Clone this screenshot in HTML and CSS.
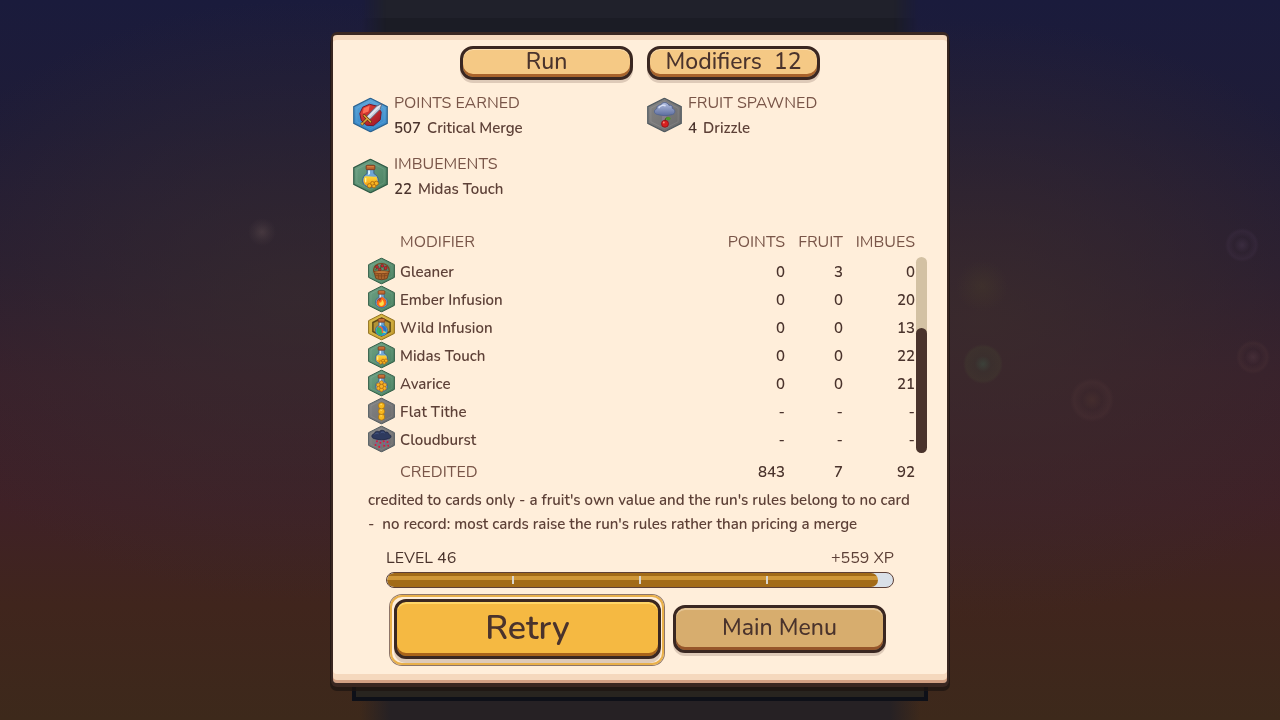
FILE: index.html
```
<!DOCTYPE html>
<html lang="en">
<head>
    <meta charset="UTF-8">
    <meta name="viewport" content="width=device-width, initial-scale=1">
    <title>Run summary</title>
    <link rel="stylesheet" href="styles.css">
</head>
<body>
    <!-- shared icon shapes -->
    <svg class="defs" aria-hidden="true">
        <defs>
            <linearGradient id="g-blue" x1="0" y1="0" x2="0" y2="1"><stop offset="0" stop-color="#5aa4d8"/><stop offset="1" stop-color="#3385c8"/></linearGradient>
            <linearGradient id="g-green" x1="0" y1="0" x2="1" y2="1"><stop offset="0" stop-color="#6fa286"/><stop offset="1" stop-color="#477f5e"/></linearGradient>
            <linearGradient id="g-gray" x1="0" y1="0" x2="1" y2="1"><stop offset="0" stop-color="#858585"/><stop offset="1" stop-color="#6a6a6c"/></linearGradient>
            <linearGradient id="g-gold" x1="0" y1="0" x2="1" y2="1"><stop offset="0" stop-color="#dfc04a"/><stop offset="1" stop-color="#c29a2a"/></linearGradient>
            <linearGradient id="g-red" x1="0" y1="0" x2="1" y2="1"><stop offset="0" stop-color="#f04a34"/><stop offset="1" stop-color="#9c1228"/></linearGradient>
            <linearGradient id="g-cloud" x1="0" y1="0" x2="0" y2="1"><stop offset="0" stop-color="#b4c0e2"/><stop offset="1" stop-color="#5c6d9e"/></linearGradient>
            <linearGradient id="g-honey" x1="0" y1="0" x2="0" y2="1"><stop offset="0" stop-color="#ffd838"/><stop offset="1" stop-color="#f59a10"/></linearGradient>

            <symbol id="hex" viewBox="0 0 36 36">
                <path d="M18 .8 35.2 9.5v17L18 35.2.8 26.500v-17z"/>
                <path d="M18 4 32 11v14L18 32 4 25V11z" fill="none" stroke="#fff" stroke-opacity=".1" stroke-width="1"/>
            </symbol>

            <symbol id="flask" viewBox="0 0 36 36">
                <path d="M14.500 11h7v4.500c3 1.500 4.500 4 4.500 7 0 4.500-3.500 7-8 7s-8-2.500-8-7c0-3 1.500-5.500 4.500-7z" fill="#6fa6d4" stroke="#3c6285" stroke-width="1"/>
                <path d="M15.500 12h2v4l-2 1z" fill="#d9f1ff"/>
                <rect x="13.500" y="7" width="9" height="4.500" rx="1" fill="#b8622e" stroke="#7a3518" stroke-width=".8"/>
                <path d="M14.500 8h7v1h-7z" fill="#e08a45"/>
            </symbol>

            <symbol id="i-critical" viewBox="0 0 36 36">
                <use href="#hex" fill="url(#g-blue)" stroke="#2c6390" stroke-width="1.300"/>
                <path d="M10 10l7-3 8 2 4 6-1 8-7 6-7-.5-5.500-5-1.500-7z" fill="url(#g-red)" stroke="#74152a" stroke-width="1"/>
                <path d="M11 11l6-2.500-1 6-6 2z" fill="#ff7058"/>
                <path d="M29.500 6.500l-1.500 5.500-11 11-3.500-3L24 9z" fill="#c6cede" stroke="#59647e" stroke-width=".9"/>
                <path d="M28 8l-13 13" stroke="#fff" stroke-width="1"/>
                <path d="M11.500 18.500l6.500 6.500M14 22.500l-4 4" stroke="#5b3414" stroke-width="2.800" stroke-linecap="round"/>
                <path d="M11.500 18.500l6.500 6.500M14 22.500l-4 4" stroke="#dca43c" stroke-width="1.600" stroke-linecap="round"/>
                <circle cx="9.500" cy="27" r="1.500" fill="#e8b040" stroke="#6d4114" stroke-width=".6"/>
            </symbol>

            <symbol id="i-drizzle" viewBox="0 0 36 36">
                <use href="#hex" fill="url(#g-gray)" stroke="#505a60" stroke-width="1.300"/>
                <path d="M15.500 17h4.500v7h-4.500z" fill="#98839b" opacity=".6"/>
                <path d="M11 17.500c-4-.5-4.500-4.500-1-6C10 8 13 7.500 14 8c1-3.500 7-4 8.500 0 3-.5 4 1 3.500 3 4 1.500 3 6 0 6.500-5 1.500-10 1.500-15 0z" fill="url(#g-cloud)" stroke="#55658f" stroke-width="1"/>
                <path d="M12 11c1-3 6-4 7-2" fill="none" stroke="#d8e0f5" stroke-width="1.400"/>
                <path d="M18.500 25c0-3 1-4 3-4" fill="none" stroke="#3b6d1e" stroke-width="1.200"/>
                <path d="M19.500 21.500c2-2.500 4-1.500 5 0-1 2.500-4 2.500-5 0z" fill="#4f9a28"/>
                <circle cx="18.500" cy="27" r="3.600" fill="#d82020" stroke="#8c1016" stroke-width=".8"/>
                <circle cx="17.300" cy="25.800" r="1" fill="#ff8a7a"/>
            </symbol>

            <symbol id="i-midas" viewBox="0 0 36 36">
                <use href="#hex" fill="url(#g-green)" stroke="#2f5a45" stroke-width="1.300"/>
                <use href="#flask"/>
                <path d="M12 18.500c4-1 8 1 12 0 2.500 4 1.500 10-6 10s-8.500-6-6-10z" fill="url(#g-honey)"/>
                <path d="M13 20.500v3.500" stroke="#fff2a0" stroke-width="1.400" stroke-linecap="round"/>
                <g fill="#f6b524" stroke="#a5620d" stroke-width=".8"><circle cx="17" cy="28" r="2.200"/><circle cx="21.500" cy="28" r="2.200"/><circle cx="24" cy="25.500" r="2.200"/><circle cx="20" cy="25.500" r="1.900"/></g>
            </symbol>

            <symbol id="i-gleaner" viewBox="0 0 36 36">
                <use href="#hex" fill="url(#g-green)" stroke="#2f5a45" stroke-width="1.300"/>
                <path d="M7.500 19C7 11 12 8 18 8s11 4 10.500 11" fill="none" stroke="#7b421d" stroke-width="1.600"/>
                <path d="M10 17l3-5M16 17l2-7M21 17l4-5" stroke="#416d28" stroke-width="1.600"/>
                <g fill="#c82a30" stroke="#671620" stroke-width=".7"><circle cx="12" cy="12.500" r="2"/><circle cx="19" cy="11" r="2"/><circle cx="15.500" cy="16" r="2"/><circle cx="23.500" cy="14" r="2.200"/></g>
                <path d="M8 19h20l-2.500 9c-4 2-11 2-15 0z" fill="#a9632b" stroke="#6b3415" stroke-width="1"/>
                <path d="M9.500 23.500c5 1.500 12 1.500 17 0M13.500 21l.8 7.500M18 21v8M22.500 21l-.8 7.500" fill="none" stroke="#7f451c" stroke-width="1"/>
                <ellipse cx="18" cy="19.500" rx="10.500" ry="2" fill="#c27b39" stroke="#6b3415" stroke-width=".9"/>
            </symbol>

            <symbol id="i-ember" viewBox="0 0 36 36">
                <use href="#hex" fill="url(#g-green)" stroke="#2f5a45" stroke-width="1.300"/>
                <use href="#flask"/>
                <circle cx="18" cy="22.500" r="6.500" fill="#a8442d"/>
                <path d="M18 14.500c5 3 7 6 6 9.500-1 3.500-3.500 4.500-6 4.500s-6-1.500-6-5c0-2 1-3 2-4.500l1 2c2-1.500 3.500-4 3-6.500z" fill="#ff6a18"/>
                <path d="M18.500 18.500c2.500 2 3 5 2.500 6.500-1 3-5.500 3-6 0-.3-1.500.5-2 1-3l1 1c1-1 1.500-2.500 1.500-4.500z" fill="#ffe04a"/>
            </symbol>

            <symbol id="i-wild" viewBox="0 0 36 36">
                <use href="#hex" fill="url(#g-gold)" stroke="#8f6e1c" stroke-width="1.300"/>
                <path d="M18 6 29.500 12v12L18 30 6.500 24V12z" fill="#b39335" stroke="#5d4a18" stroke-width="2"/>
                <use href="#flask"/>
                <circle cx="18" cy="22.500" r="7" fill="#22a0d8"/>
                <path d="M12 20c2-4 5-4 6-1s-1 3 1 4 1 4-1 6c-5 0-8-4-6-9z" fill="#34b06a"/>
                <path d="M19 16c4 1 6 4 5.500 7-2 1-3-1-4-2s-3-2-1.500-5z" fill="#2f70cf"/>
                <path d="M14 18c3-1 5 1 5 3s1 3 0 5" fill="none" stroke="#f0603a" stroke-width="2"/>
                <path d="M20 25c1-1 3 0 3 1" fill="none" stroke="#fbe052" stroke-width="1.500"/>
            </symbol>

            <symbol id="i-avarice" viewBox="0 0 36 36">
                <use href="#hex" fill="url(#g-green)" stroke="#2f5a45" stroke-width="1.300"/>
                <use href="#flask"/>
                <g fill="#f8b326" stroke="#a8620c" stroke-width=".8"><circle cx="18" cy="17.500" r="2.600"/><circle cx="13.800" cy="20.500" r="2.600"/><circle cx="22.200" cy="20.500" r="2.600"/><circle cx="14.200" cy="25" r="2.600"/><circle cx="21.800" cy="25" r="2.600"/><circle cx="18" cy="27" r="2.600"/><circle cx="18" cy="22.500" r="2.800"/></g>
            </symbol>

            <symbol id="i-tithe" viewBox="0 0 36 36">
                <use href="#hex" fill="url(#g-gray)" stroke="#505a60" stroke-width="1.300"/>
                <g fill="#f8b81c" stroke="#9a6510" stroke-width=".8"><circle cx="18" cy="26" r="4.200"/><circle cx="18" cy="18.500" r="4.200"/><circle cx="18" cy="11" r="4.200"/></g>
                <path d="M16.500 9.500h2M16.500 17h2M16.500 24.500h2" stroke="#ffe680" stroke-width="1.200"/>
            </symbol>

            <symbol id="i-cloudburst" viewBox="0 0 36 36">
                <use href="#hex" fill="url(#g-gray)" stroke="#505a60" stroke-width="1.300"/>
                <path d="M12 18l-2 9M17 18l-1 11M22 18v10M26 18l1 7" stroke="#8459a5" stroke-width="1.300"/>
                <g fill="#d81c3a"><circle cx="12" cy="21" r="1.400"/><circle cx="10" cy="26" r="1.300"/><circle cx="16.500" cy="23" r="1.400"/><circle cx="15" cy="28.500" r="1.400"/><circle cx="21" cy="21" r="1.400"/><circle cx="21.500" cy="27" r="1.400"/><circle cx="26" cy="22" r="1.400"/><circle cx="27" cy="27" r="1.300"/></g>
                <path d="M8.500 17.500c-5-1-4-6 0-6.500C9 7.500 13 7 15 8.500c2-3 7-2.500 8 .5 3-1 5 .5 4.500 3 4.500.5 4 5 0 5.500-6 2-13 2-19 0z" fill="#2e3a5e" stroke="#1d2541" stroke-width="1"/>
                <path d="M9 12c1-2 4-2 5-1M17 10c1-1.500 4-1.500 5 0" fill="none" stroke="#4c5e8b" stroke-width="1.200"/>
            </symbol>
        </defs>
    </svg>

    <div class="scene" aria-hidden="true">
        <div class="lane"></div>
    </div>

    <main class="stage">
        <section class="panel">
            <nav class="tabs">
                <button class="btn tab" type="button">Run</button>
                <button class="btn tab" type="button">Modifiers&nbsp; 12</button>
            </nav>

            <div class="stats">
                <div class="stat">
                    <svg class="icon-big"><use href="#i-critical"/></svg>
                    <div>
                        <h2>POINTS EARNED</h2>
                        <p><b>507</b>Critical Merge</p>
                    </div>
                </div>
                <div class="stat">
                    <svg class="icon-big"><use href="#i-drizzle"/></svg>
                    <div>
                        <h2>FRUIT SPAWNED</h2>
                        <p><b>4</b>Drizzle</p>
                    </div>
                </div>
                <div class="stat">
                    <svg class="icon-big"><use href="#i-midas"/></svg>
                    <div>
                        <h2>IMBUEMENTS</h2>
                        <p><b>22</b>Midas Touch</p>
                    </div>
                </div>
            </div>

            <div class="report">
                <table class="mods">
                    <thead>
                        <tr><td class="ico"></td><th class="name">MODIFIER</th><th class="points">POINTS</th><th class="fruit">FRUIT</th><th class="imbues">IMBUES</th></tr>
                    </thead>
                    <tbody>
                        <tr><td class="ico"><svg class="icon"><use href="#i-gleaner"/></svg></td><td class="name">Gleaner</td><td>0</td><td>3</td><td>0</td></tr>
                        <tr><td class="ico"><svg class="icon"><use href="#i-ember"/></svg></td><td class="name">Ember Infusion</td><td>0</td><td>0</td><td>20</td></tr>
                        <tr><td class="ico"><svg class="icon"><use href="#i-wild"/></svg></td><td class="name">Wild Infusion</td><td>0</td><td>0</td><td>13</td></tr>
                        <tr><td class="ico"><svg class="icon"><use href="#i-midas"/></svg></td><td class="name">Midas Touch</td><td>0</td><td>0</td><td>22</td></tr>
                        <tr><td class="ico"><svg class="icon"><use href="#i-avarice"/></svg></td><td class="name">Avarice</td><td>0</td><td>0</td><td>21</td></tr>
                        <tr><td class="ico"><svg class="icon"><use href="#i-tithe"/></svg></td><td class="name">Flat Tithe</td><td>-</td><td>-</td><td>-</td></tr>
                        <tr><td class="ico"><svg class="icon"><use href="#i-cloudburst"/></svg></td><td class="name">Cloudburst</td><td>-</td><td>-</td><td>-</td></tr>
                    </tbody>
                    <tfoot>
                        <tr><td class="ico"></td><th class="name">CREDITED</th><td>843</td><td>7</td><td>92</td></tr>
                    </tfoot>
                </table>
                <div class="scrollbar"><div class="thumb"></div></div>
            </div>

            <div class="notes">
                <p>credited to cards only - a fruit's own value and the run's rules belong to no card</p>
                <p>-&nbsp; no record: most cards raise the run's rules rather than pricing a merge</p>
            </div>

            <div class="level">
                <div class="level-text">
                    <span id="level-name">LEVEL 46</span>
                    <span class="xp">+559 XP</span>
                </div>
                <div class="bar" role="progressbar" aria-labelledby="level-name" aria-valuenow="97" aria-valuemin="0" aria-valuemax="100">
                    <div class="fill" style="width: 97%"></div>
                    <div class="ticks"><i></i><i></i><i></i><i></i></div>
                </div>
            </div>

            <div class="actions">
                <button class="btn retry" type="button">Retry</button>
                <button class="btn menu" type="button">Main Menu</button>
            </div>
        </section>
    </main>
</body>
</html>
```
FILE: styles.css
```
*{
    margin: 0;
    padding: 0;
    box-sizing: border-box;
}
body{
    min-height: 100vh;
    font-family: Nunito, Lato, "Noto Sans", sans-serif;
    font-size: 15px;
    font-weight: 600;
    line-height: 24px;
    color: #5d4037;
    background-color: #2c2029;
    overflow-x: hidden;
}
.defs{
    position: absolute;
    width: 0;
    height: 0;
}

/* night sky behind the panel */
.scene{
    position: fixed;
    inset: 0;
    z-index: -1;
    background:
        radial-gradient(circle at 262px 232px, rgba(110,90,90,.35) 0, rgba(110,90,90,.12) 8px, transparent 14px),
        radial-gradient(circle at 983px 364px, rgba(60,90,70,.5) 0, rgba(60,75,50,.2) 8px, rgba(70,75,50,.25) 17px, transparent 20px),
        radial-gradient(circle at 1092px 400px, rgba(90,60,50,.3) 0, transparent 10px, rgba(90,60,60,.2) 18px, transparent 22px),
        radial-gradient(circle at 1242px 245px, rgba(90,70,100,.3) 0, transparent 8px, rgba(80,60,90,.2) 14px, transparent 17px),
        radial-gradient(circle at 1253px 357px, rgba(100,70,80,.3) 0, transparent 8px, rgba(90,60,60,.2) 14px, transparent 17px),
        radial-gradient(circle at 982px 286px, rgba(80,70,40,.25) 0, transparent 26px),
        radial-gradient(ellipse 420px 300px at 300px 300px, rgba(56,44,46,.7), transparent),
        radial-gradient(ellipse 420px 300px at 980px 320px, rgba(60,44,44,.8), transparent),
        linear-gradient(#1a1b3c 0, #1f1c37 18%, #2a1e31 38%, #38202c 52%, #3f2127 70%, #40251d 84%, #3d291b 100%);
}
.lane{
    width: 576px;
    height: 701px;
    margin: 0 auto;
    border: 4px solid #0e1018;
    border-top: 0;
    background: linear-gradient(#20212b 18px, #1b1c25 18px, #1b1c25 40px, #28241f 90%);
    -webkit-mask: linear-gradient(90deg, transparent 10px, #000 34px, #000 542px, transparent 566px) top / 100% 300px no-repeat, linear-gradient(#000, #000) bottom / 100% 400px no-repeat;
}
.scene::after{
    content: "";
    display: block;
    width: 560px;
    height: 100px;
    margin: 0 auto;
    background: linear-gradient(90deg, transparent, #262124 30px, #262124 530px, transparent);
}

.stage{
    display: flex;
    justify-content: center;
    padding-top: 32px;
}
.panel{
    width: 618px;
    max-width: 100%;
    padding: 11px 20px 24px;
    border: 2px solid #3a2721;
    border-top-width: 3px;
    border-radius: 6px;
    background-color: #f5d8bd;
    background-image: linear-gradient(#ffeeda, #ffeeda);
    box-shadow: inset 0 5px 0 #f5d8bd, inset 0 -3px 0 #d3a184, inset 0 -9px 0 #f5d8bd, 0 2px 0 #3a2721, 0 5px 0 1px rgba(30,20,17,.75);
}

/* buttons */
.btn{
    font-family: inherit;
    font-weight: 500;
    color: #4a332c;
    text-align: center;
    border: 3px solid #3a2721;
    cursor: pointer;
}
.tabs{
    display: flex;
    justify-content: center;
    gap: 14px;
    margin-bottom: 11px;
}
.tab{
    width: 173px;
    height: 34px;
    padding-bottom: 3px;
    border-radius: 13px;
    font-size: 23px;
    line-height: 24px;
    background-color: #f5c985;
    box-shadow: inset 0 -3px 0 #a9632b, inset 0 1px 0 #fbe0b4, 0 3px 0 #decab8;
}

/* best cards */
.stats{
    display: grid;
    grid-template-columns: 1fr 1fr;
    gap: 11px 14px;
    margin-bottom: 23px;
    line-height: 25px;
}
.stat{
    display: flex;
    gap: 6px;
}
.icon-big{
    width: 35px;
    height: 36px;
    margin-top: 6px;
}
.stat h2{
    font-size: 16px;
    font-weight: 400;
    color: #795548;
}
.stat b{
    margin-right: 6px;
    font-weight: 600;
    color: #4a332c;
}

/* modifier table */
.report{
    display: flex;
    padding-left: 15px;
}
.mods{
    flex: 1;
    border-collapse: collapse;
    table-layout: fixed;
}
.mods th{
    height: 32px;
    padding-top: 2px;
    font-size: 16px;
    font-weight: 400;
    color: #795548;
    text-align: right;
}
.mods td{
    height: 28px;
    padding-top: 2px;
    text-align: right;
    color: #4a332c;
}
.mods .name{
    text-align: left;
}
.mods td.name{
    color: #5d4037;
}
.mods .ico{
    width: 32px;
    padding-top: 0;
}
.points{
    width: 80px;
}
.fruit{
    width: 58px;
}
.imbues{
    width: 72px;
}
.mods tfoot th, .mods tfoot td{
    height: 35px;
}
.icon{
    display: block;
    width: 27px;
    height: 28px;
}
.scrollbar{
    width: 11px;
    margin: 32px 0 35px 1px;
    border-radius: 6px;
    background-color: #d3c1a3;
}
.thumb{
    height: 125px;
    margin-top: 71px;
    border-radius: 6px;
    background-color: #4a332c;
}
.notes{
    padding-left: 15px;
}

/* level progress */
.level{
    margin: 10px 33px 0;
}
.level-text{
    display: flex;
    justify-content: space-between;
    margin-bottom: 2px;
    font-size: 16px;
    font-weight: 400;
    color: #4a332c;
}
.xp{
    color: #5d4037;
}
.bar{
    position: relative;
    height: 16px;
    border: 1px solid #5d4037;
    border-radius: 8px;
    background-color: #d9e0e8;
    overflow: hidden;
}
.fill{
    height: 100%;
    border-radius: 7px;
    background: linear-gradient(#a26b18 3px, #cf9738 3px, #cf9738 7px, #a26b18 7px);
}
.ticks{
    position: absolute;
    inset: 3px 0;
    display: flex;
}
.ticks i{
    flex: 1;
    border-right: 2px solid #d9d5cc;
}
.ticks i:last-child{
    border: 0;
}

.actions{
    display: flex;
    justify-content: center;
    align-items: center;
    gap: 12px;
    margin-top: 11px;
}
.retry{
    position: relative;
    width: 267px;
    height: 60px;
    padding-bottom: 2px;
    border-radius: 12px;
    font-size: 34px;
    font-weight: 600;
    line-height: 40px;
    background-color: #f5b942;
    box-shadow: inset 0 -3px 0 #a9631a, inset 0 2px 0 #ffd567, 0 4px 0 #decab8;
}
/* focus ring */
.retry::after{
    content: "";
    position: absolute;
    inset: -7px -6px -9px -7px;
    border: 2px solid #e9b04a;
    border-radius: 12px;
    box-shadow: 0 0 0 1px rgba(93,64,55,.7);
}
.menu{
    width: 213px;
    height: 48px;
    padding-bottom: 2px;
    border-radius: 12px;
    font-size: 23px;
    line-height: 28px;
    background-color: #d7ad6e;
    box-shadow: inset 0 -3px 0 #96562a, inset 0 2px 0 #e6c798, 0 3px 0 #decab8;
}
```
